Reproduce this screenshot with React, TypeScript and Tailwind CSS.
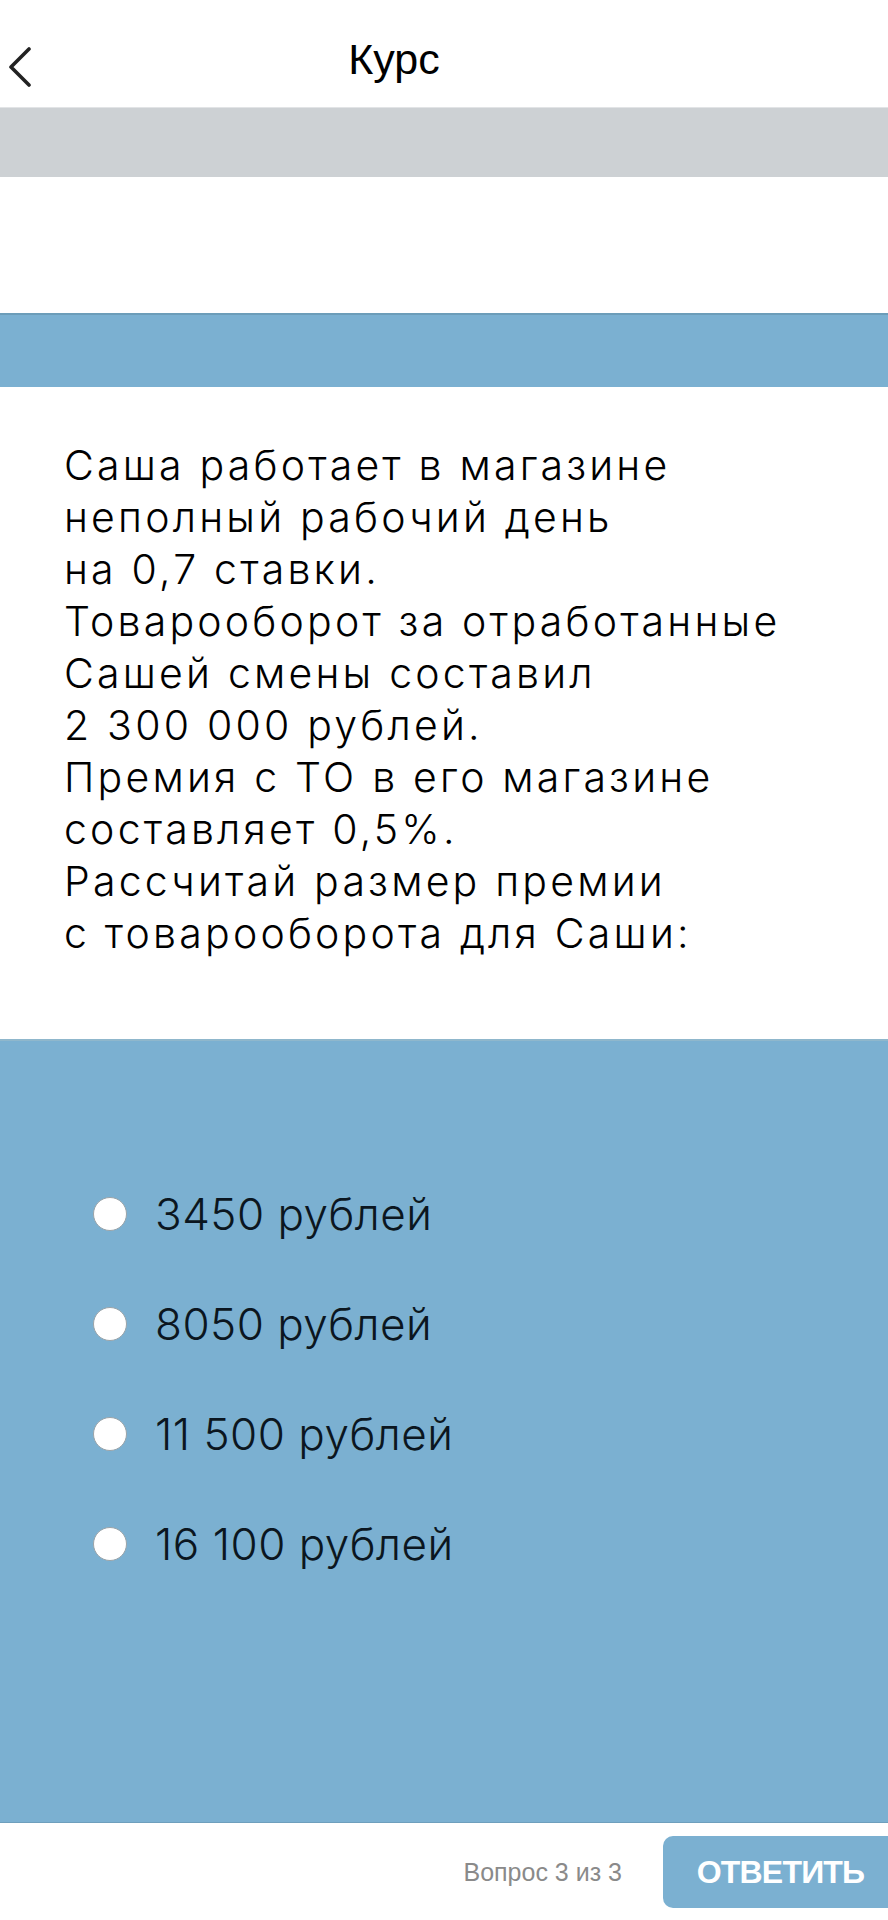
import React from 'react';

const questionLines = [
  'Саша работает в магазине',
  'неполный рабочий день',
  'на 0,7 ставки.',
  'Товарооборот за отработанные',
  'Сашей смены составил',
  '2 300 000 рублей.',
  'Премия с ТО в его магазине',
  'составляет 0,5%.',
  'Рассчитай размер премии',
  'с товарооборота для Саши:',
];

const answers = ['3450 рублей', '8050 рублей', '11 500 рублей', '16 100 рублей'];

const BackIcon = () => (
  <svg width="26" height="40" viewBox="0 0 26 40" fill="none">
    <polyline points="22,2 4,20 22,38" stroke="#222" strokeWidth="3.6" strokeLinecap="round" strokeLinejoin="round" />
  </svg>
);

export default function App() {
  return (
    <div className="w-[888px] h-[1920px] bg-white flex flex-col overflow-hidden">
      {/* header */}
      <header className="h-[108px] pt-[20px] flex items-center border-b border-[#e2e4e6] shrink-0">
        <button className="w-[80px] pl-[7px] pt-[6px] flex items-center">
          <BackIcon />
        </button>
        <h1 className="flex-1 text-center text-[43px] text-black pb-[8px] font-['Liberation_Sans',Arial,sans-serif]">
          Курс
        </h1>
        <div className="w-[180px]" />
      </header>

      <div className="h-[69px] bg-[#cdd1d4] shrink-0" />
      <div className="h-[136px] shrink-0" />
      <div className="h-[74px] bg-[#7bb0d1] border-t-2 border-[#6c9db9] shrink-0" />

      {/* question */}
      <section className="h-[652px] pt-[52px] pl-[64px] shrink-0">
        <p className="text-[41px] leading-[52px] font-light tracking-[3.2px] text-black font-['Inter','Noto_Sans',sans-serif]">
          {questionLines.map((l) => (
            <span key={l} className="block">{l}</span>
          ))}
        </p>
      </section>

      {/* answers */}
      <section className="h-[783px] bg-[#7bb0d1] border-t-2 border-[#8fb7cc] pt-[118px] pl-[93px] shrink-0">
        {answers.map((a) => (
          <label key={a} className="h-[110px] flex items-center">
            <span className="w-[34px] h-[34px] rounded-full bg-white border border-[#9aa3a8] shrink-0" />
            <span className="ml-[28px] text-[44px] font-light tracking-[0.5px] text-[#0b1620] font-['Inter','Noto_Sans',sans-serif]">
              {a}
            </span>
          </label>
        ))}
      </section>

      {/* footer */}
      <footer className="flex-1 border-t border-[#6e9fbd] flex items-center justify-end font-['Liberation_Sans',Arial,sans-serif]">
        <span className="text-[25px] text-[#8a8a8a] mr-[41px] pt-[2px]">Вопрос 3 из 3</span>
        <button className="w-[225px] h-[72px] rounded-l-[10px] bg-[#7bb0d1] text-white text-[32px] font-bold tracking-tight pl-[10px]">
          ОТВЕТИТЬ
        </button>
      </footer>
    </div>
  );
}
